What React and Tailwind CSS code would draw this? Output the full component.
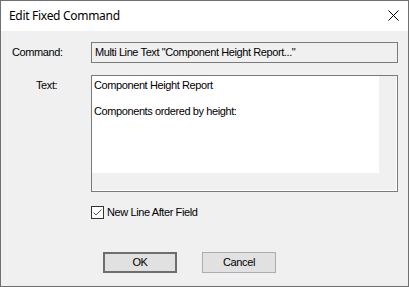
export default function App() {
  const ui = { fontFamily: '"Liberation Sans", Arial, sans-serif' };
  return (
    <div className="w-[409px] h-[287px] box-border border border-[#707070] bg-[#f0f0f0] flex flex-col overflow-hidden">
      <div className="h-[30px] bg-white flex items-center justify-between pl-[8px] pr-[9px] shrink-0">
        <span className="text-[12px] tracking-[-0.3px] text-black" style={{ fontFamily: '"Noto Sans", "Open Sans", sans-serif' }}>
          Edit Fixed Command
        </span>
        <svg width="11" height="11" viewBox="0 0 11 11" className="mt-[-1px]">
          <path d="M0.5 0.5 L10.5 10.5 M10.5 0.5 L0.5 10.5" stroke="#000" strokeWidth="1" fill="none" />
        </svg>
      </div>
      <div className="flex flex-col pt-[11px] pr-[10px] text-[11px] tracking-[-0.4px] text-black" style={ui}>
        <div className="flex items-center">
          <div className="w-[90px] pl-[11px] shrink-0">Command:</div>
          <div className="w-[307px] h-[21px] border border-[#7a7a7a] bg-[#f0f0f0] flex items-center pl-[3px] whitespace-nowrap">
            Multi Line Text "Component Height Report..."
          </div>
        </div>
        <div className="flex mt-[12px]">
          <div className="w-[90px] pl-[35px] pt-[2px] shrink-0">Text:</div>
          <div className="w-[307px] h-[117px] border border-[#7a7a7a] shadow-[inset_-1px_-1px_0_#ffffff] bg-[#f0f0f0] flex flex-col">
            <div className="w-[287px] h-[97px] bg-white pl-[2px] pt-[3px] leading-[13px]">
              <div>Component Height Report</div>
              <div>&nbsp;</div>
              <div>Components ordered by height:</div>
            </div>
          </div>
        </div>
        <div className="flex items-center mt-[12px] ml-[90px]">
          <div className="w-[13px] h-[13px] border border-[#333333] bg-white flex items-center justify-center">
            <svg width="11" height="11" viewBox="0 0 11 11">
              <path d="M1.5 5.5 L4 8 L9.5 2.5" stroke="#555" strokeWidth="1" fill="none" />
            </svg>
          </div>
          <span className="ml-[3px]">New Line After Field</span>
        </div>
        <div className="flex mt-[31px] ml-[102px] gap-[25px]">
          <div className="w-[74px] h-[21px] border-2 border-[#6e6e6e] bg-[#e1e1e1] flex items-center justify-center">OK</div>
          <div className="w-[74px] h-[21px] border border-[#adadad] bg-[#e1e1e1] flex items-center justify-center">Cancel</div>
        </div>
      </div>
    </div>
  );
}
